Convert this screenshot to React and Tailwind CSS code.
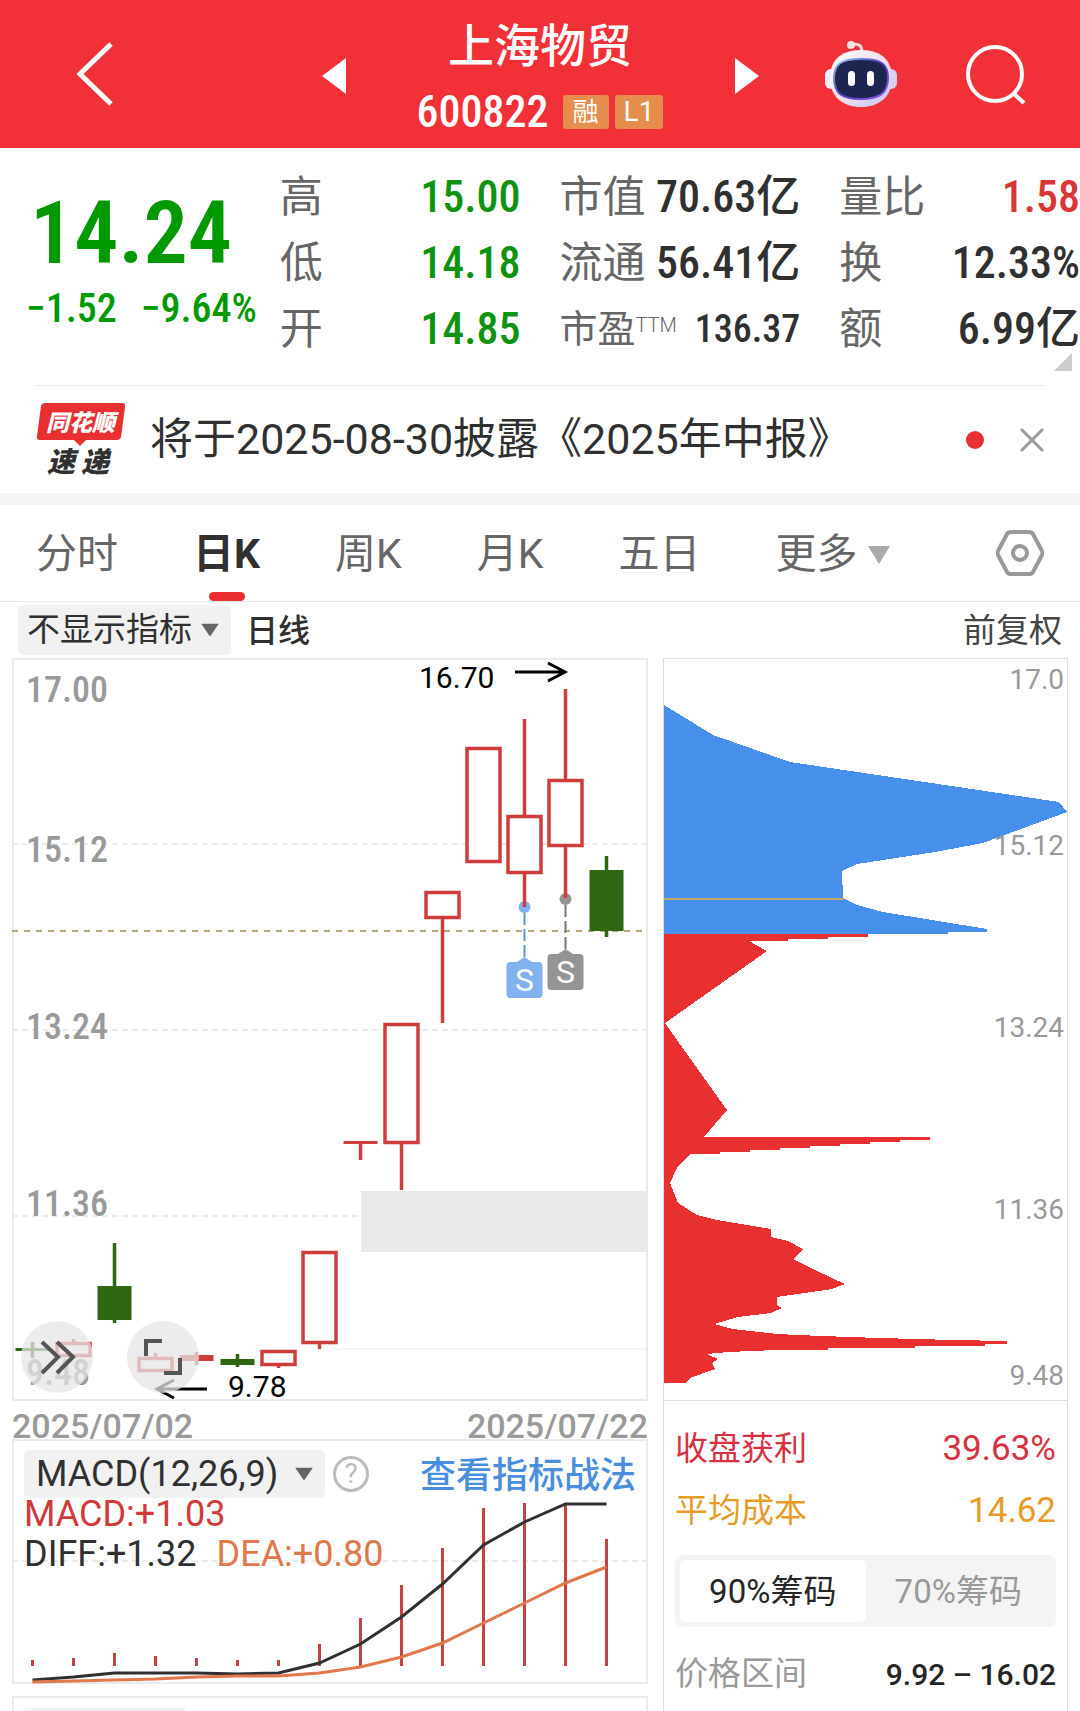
import React, { useState } from "react";

const SANS = "font-['Roboto','Noto_Sans_CJK_SC',sans-serif]";
const DIGITS =
  "font-['Roboto_Condensed','Liberation_Sans_Narrow','Roboto','Noto_Sans_CJK_SC',sans-serif]";

const QUOTES = [
  [
    { label: "高", value: "15.00", color: "text-[#0f930f]" },
    { label: "低", value: "14.18", color: "text-[#0f930f]" },
    { label: "开", value: "14.85", color: "text-[#0f930f]" },
  ],
  [
    { label: "市值", value: "70.63亿", color: "text-[#303030]" },
    { label: "流通", value: "56.41亿", color: "text-[#303030]" },
    { label: "市盈", sup: "TTM", value: "136.37", color: "text-[#303030]" },
  ],
  [
    { label: "量比", value: "1.58", color: "text-[#d93636]" },
    { label: "换", value: "12.33%", color: "text-[#303030]" },
    { label: "额", value: "6.99亿", color: "text-[#303030]" },
  ],
];

const TABS = ["分时", "日K", "周K", "月K", "五日"];

// first candle center and the step between candles
const X0 = 20.5;
const STEP = 41;

// body top / bottom, wick top / bottom
const CANDLES = [
  { type: "down", body: [690, 693], wick: [684, 700] },
  { type: "up", body: [684, 699], wick: [681, 699] },
  { type: "down", body: [628, 662], wick: [585, 665] },
  { type: "up", body: [699, 714], wick: [695, 714] },
  { type: "flat", body: [697, 703], wick: [694, 707] },
  { type: "down", body: [701, 707], wick: [696, 709] },
  { type: "up", body: [692, 708], wick: [692, 710] },
  { type: "up", body: [593, 686], wick: [593, 691] },
  { type: "flat", body: [483, 486], wick: [483, 502] },
  { type: "up", body: [365, 486], wick: [365, 532] },
  { type: "up", body: [233, 261], wick: [233, 365] },
  { type: "up", body: [89, 205], wick: [89, 205] },
  { type: "up", body: [157, 216], wick: [61, 249] },
  { type: "up", body: [121, 189], wick: [31, 240] },
  { type: "down", body: [212, 273], wick: [198, 279] },
];

const PRICE_LABELS = [
  { text: "17.00", y: 44 },
  { text: "15.12", y: 204 },
  { text: "13.24", y: 381 },
  { text: "11.36", y: 558 },
  { text: "9.48", y: 727 },
];

const CHIP_LABELS = [
  { text: "17.0", y: 31 },
  { text: "15.12", y: 197 },
  { text: "13.24", y: 379 },
  { text: "11.36", y: 561 },
  { text: "9.48", y: 727 },
];

const CHIPS_ABOVE =
  "1,47 50,77 127,104 396,144 404,154 320,185 272,194 194,206 179,213 180,240 194,247 220,254 324,271 324,274 285,274 285,276 1,276";
const CHIPS_BELOW =
  "1,276 205,276 205,279 165,279 165,281 125,281 125,283 86,283 104,293 2,365 14,382 64,452 41,479 267,479 267,482 237,482 237,484 207,484 207,486 177,486 177,488 147,488 147,490 117,490 117,492 87,492 87,494 57,494 57,496 27,496 14,510 7,525 15,545 34,557 54,562 108,571 108,579 125,583 140,591 130,601 152,612 182,626 169,631 134,636 114,639 114,647 119,650 108,655 75,659 51,666 70,671 114,676 158,678 217,680 290,682 344,683 344,686 322,686 322,688 252,688 252,690 165,690 165,692 113,692 65,694 44,696 55,701 49,705 52,711 27,720 23,725 1,725";

const MACD_BARS = [221, 219, 214, 217, 219, 221, 221, 205, 179, 146, 109, 69, 64, 65, 100];
const DIFF = [241, 238, 234, 234, 234, 235, 234, 224, 205, 178, 145, 106, 83, 65, 65];
const DEA = [243, 242, 241, 240, 238, 237, 237, 234, 228, 218, 204, 184, 164, 144, 128];

const toPoints = (values) => values.map((y, i) => `${X0 + i * STEP},${y}`).join(" ");

const Robot = () => (
  <svg width="72" height="68" viewBox="0 0 72 68">
    <defs>
      <linearGradient id="shell" x1="0" y1="0" x2="1" y2="1">
        <stop offset="0" stopColor="#fff" />
        <stop offset="0.5" stopColor="#f3dfee" />
        <stop offset="1" stopColor="#c3c2f7" />
      </linearGradient>
      <linearGradient id="rim" x1="0" y1="0" x2="1" y2="1">
        <stop offset="0" stopColor="#8fd0f5" />
        <stop offset="0.5" stopColor="#4a38b8" />
        <stop offset="1" stopColor="#8d5be8" />
      </linearGradient>
    </defs>
    <path d="M27 4 C35 4 37 6 37 12" fill="none" stroke="#f7dce4" strokeWidth="3" />
    <circle cx="26" cy="5" r="4" fill="#fbe3e8" />
    <rect x="0" y="29" width="14" height="20" rx="6" fill="#eef0ff" />
    <rect x="58" y="29" width="14" height="20" rx="6" fill="#d9cdf6" />
    <path
      d="M36 10 C58 10 67 22 67 38 C67 57 54 67 36 67 C18 67 5 57 5 38 C5 22 14 10 36 10 Z"
      fill="url(#shell)"
    />
    <path
      d="M36 19 C56 19 63 24 63 38 C63 53 55 59 36 59 C17 59 9 53 9 38 C9 24 16 19 36 19 Z"
      fill="#1c2550"
      stroke="url(#rim)"
      strokeWidth="2"
    />
    <rect x="23" y="31" width="7" height="15" rx="3.5" fill="#fff" />
    <rect x="42" y="31" width="7" height="15" rx="3.5" fill="#fff" />
  </svg>
);

const Header = () => (
  <header className="grid h-[148px] grid-cols-[1fr_437px_1fr] items-center bg-[#f13038] text-white">
    <button aria-label="返回" className="justify-self-start pl-[75px]">
      <svg width="40" height="68" viewBox="0 0 40 68">
        <path d="M36 4 L5 34 L36 64" fill="none" stroke="#fff" strokeWidth="5" />
      </svg>
    </button>
    <div className="flex items-center justify-between">
      <button aria-label="上一只" className="pt-1">
        <svg width="24" height="36" viewBox="0 0 24 36">
          <path d="M24 0 V36 L0 18 Z" fill="#fff" />
        </svg>
      </button>
      <div className="flex flex-col items-center gap-2 pt-2">
        <h1 className="text-[46px] font-medium leading-[60px]">上海物贸</h1>
        <div className="flex items-center gap-[6px]">
          <span className={`mr-2 text-[44px] font-medium leading-[56px] ${DIGITS}`}>600822</span>
          <span className="rounded-[3px] bg-[#e48d4c] px-[10px] text-[26px] leading-[34px]">融</span>
          <span className="rounded-[3px] bg-[#e48d4c] px-[9px] text-[28px] leading-[34px]">L1</span>
        </div>
      </div>
      <button aria-label="下一只" className="pt-1">
        <svg width="24" height="36" viewBox="0 0 24 36">
          <path d="M0 0 V36 L24 18 Z" fill="#fff" />
        </svg>
      </button>
    </div>
    <div className="flex items-center justify-end gap-[68px] pr-[53px]">
      <button aria-label="助手">
        <Robot />
      </button>
      <button aria-label="搜索">
        <svg width="62" height="62" viewBox="0 0 62 62">
          <circle cx="30" cy="31" r="27" fill="none" stroke="#fff" strokeWidth="4" />
          <path d="M48 50 L59 60" stroke="#fff" strokeWidth="4" />
        </svg>
      </button>
    </div>
  </header>
);

const Quote = () => (
  <section className="relative grid grid-cols-4 gap-x-[39px] pt-4 pb-[23px]">
    <div className={`whitespace-nowrap pt-6 text-[#009900] ${DIGITS}`}>
      <div className="pl-[30px] text-[88px] font-semibold leading-[90px]">14.24</div>
      <div className="flex gap-6 pl-[26px] text-[40px] font-medium leading-[62px]">
        <span>−1.52</span>
        <span>−9.64%</span>
      </div>
    </div>
    {QUOTES.map((column, i) => (
      <dl key={i}>
        {column.map((item) => (
          <div key={item.label} className="flex h-[66px] items-center justify-between whitespace-nowrap">
            <dt className={`text-[#666] ${item.sup ? "text-[38px]" : "text-[43px]"}`}>
              {item.label}
              {item.sup && <sup className="text-[20px] font-light">{item.sup}</sup>}
            </dt>
            <dd
              className={`font-medium ${DIGITS} ${item.color} ${item.sup ? "text-[38px]" : "text-[44px]"}`}
            >
              {item.value}
            </dd>
          </div>
        ))}
      </dl>
    ))}
    <svg className="absolute right-2 bottom-[14px]" width="18" height="18" viewBox="0 0 18 18">
      <path d="M18 0 V18 H0 Z" fill="#ccc" />
    </svg>
  </section>
);

const News = () => (
  <section className="mx-9 flex h-[108px] items-center border-t border-[#eaeaea]">
    <svg
      className={`overflow-visible ${SANS}`}
      width="90"
      height="76"
      viewBox="0 0 90 76"
      fontStyle="italic"
      fontWeight="900"
    >
      <path
        d="M9 1 H86 Q90 1 89 5 L85 35 Q84 38 81 38 H50 L44 44 L38 38 H4 Q0 38 1 34 L5 4 Q6 1 9 1 Z"
        fill="#e93030"
      />
      <text x="10" y="29" fontSize="23" fill="#fff">
        同花顺
      </text>
      <text x="11" y="70" fontSize="28" fill="#303030">
        速
      </text>
      <text x="45" y="70" fontSize="28" fill="#303030">
        递
      </text>
    </svg>
    <a href="#news" className="ml-6 flex-1 whitespace-nowrap text-[43px] text-[#303030]">
      将于2025-08-30披露《2025年中报》
    </a>
    <span className="size-[18px] rounded-full bg-[#e93030]" />
    <button aria-label="关闭" className="ml-9">
      <svg width="24" height="24" viewBox="0 0 24 24">
        <path d="M1 1 L23 23 M23 1 L1 23" stroke="#999" strokeWidth="3" />
      </svg>
    </button>
  </section>
);

const Tabs = () => {
  const [tab, setTab] = useState("日K");
  return (
    <nav className="flex h-[97px] items-stretch gap-[75px] border-b border-[#e6e6e6] px-9 text-[41px]">
      {TABS.map((t) => (
        <button
          key={t}
          className={`relative pt-1 whitespace-nowrap ${tab === t ? "font-bold text-[#303030]" : "text-[#666]"}`}
          onClick={() => setTab(t)}
        >
          {t}
          {tab === t && (
            <span className="absolute bottom-0 left-1/2 h-[9px] w-9 -translate-x-1/2 rounded-full bg-[#e93030]" />
          )}
        </button>
      ))}
      <button className="flex items-center gap-[10px] pt-1 whitespace-nowrap text-[#666]">
        更多
        <svg width="22" height="18" viewBox="0 0 22 18">
          <path d="M0 0 H22 L11 18 Z" fill="#aaa" />
        </svg>
      </button>
      <button aria-label="设置" className="ml-auto">
        <svg width="48" height="46" viewBox="0 0 48 46" fill="none" stroke="#999">
          <path
            d="M15 2 H33 Q36 2 37 4 L46 21 Q47 23 46 25 L37 42 Q36 44 33 44 H15 Q12 44 11 42 L2 25 Q1 23 2 21 L11 4 Q12 2 15 2 Z"
            strokeWidth="4"
          />
          <circle cx="24" cy="23" r="7" strokeWidth="4" />
        </svg>
      </button>
    </nav>
  );
};

const Arrow = () => (
  <svg className="pointer-events-none absolute top-1/2 right-3 -translate-y-1/2" width="18" height="13" viewBox="0 0 18 13">
    <path d="M0 0 H18 L9 13 Z" fill="#666" />
  </svg>
);

const Marker = ({ x, dot, top, color, line }) => (
  <g>
    <circle cx={x} cy={dot} r="6" fill={color} />
    <path d={`M${x} ${dot + 6} V${top}`} stroke={line} strokeWidth="2" strokeDasharray="12 4" />
    <path d={`M${x - 9} ${top + 1} L${x} ${top - 5} L${x + 9} ${top + 1} Z`} fill={color} />
    <rect x={x - 18} y={top} width="36" height="36" rx="4" fill={color} />
    <text x={x} y={top + 29} fontSize="32" fill="#fff" textAnchor="middle">
      S
    </text>
  </g>
);

const KLine = () => (
  <div className="relative">
    <svg className={`block w-full overflow-visible ${SANS}`} viewBox="0 0 636 743">
      <rect x="1" y="1" width="634" height="741" fill="none" stroke="#ebebeb" strokeWidth="2" />
      <g stroke="#ebebeb" strokeWidth="2">
        <path d="M0 186 H636 M0 372 H636 M0 558 H636" strokeDasharray="6 4" />
        <path d="M320 691 H636" strokeWidth="1" />
      </g>
      <rect x="349" y="533" width="287" height="61" fill="#e9e9e9" />
      <path d="M0 273 H630" stroke="#bda57a" strokeWidth="2" strokeDasharray="6 6" />
      <g className={DIGITS} fontSize="36" fontWeight="500" fill="#999">
        {PRICE_LABELS.map((l) => (
          <text key={l.text} x="14" y={l.y}>
            {l.text}
          </text>
        ))}
      </g>
      <Marker x={512.5} dot={249} top={304} color="#82b2ee" line="#5b96dc" />
      <Marker x={553.5} dot={241} top={296} color="#949494" line="#777" />
      {CANDLES.map((c, i) => {
        const x = X0 + i * STEP;
        const [top, bottom] = c.body;
        const color = c.type === "down" ? "#2f6612" : "#cf3c3c";
        return (
          <g key={i} stroke={color} strokeWidth="3.5">
            <path d={`M${x} ${c.wick[0]} V${top} M${x} ${bottom} V${c.wick[1]}`} />
            {c.type === "up" ? (
              <rect x={x - 16.5} y={top + 1.5} width="33" height={bottom - top - 3} fill="#fff" />
            ) : (
              <rect x={x - 17} y={top} width="34" height={bottom - top} fill={color} stroke="none" />
            )}
          </g>
        );
      })}
      <g fontSize="30" fill="#000">
        <text x="407" y="30">16.70</text>
        <text x="216" y="739">9.78</text>
      </g>
      <g fill="none" stroke="#000" strokeWidth="3">
        <path d="M503 14 H552 M536 5 L553 14 L536 23" />
        <path d="M195 731 H146 M162 722 L145 731 L162 740" />
      </g>
    </svg>
    <button aria-label="展开" className="absolute bottom-2 left-[9px] size-[72px] rounded-full bg-[#e6e6e6]/75">
      <svg width="72" height="72" viewBox="0 0 72 72" fill="none" stroke="#555" strokeWidth="4">
        <path d="M21 21 L37 36 L21 52 M36 21 L52 36 L36 52" />
      </svg>
    </button>
    <button aria-label="全屏" className="absolute bottom-2 left-[115px] size-[72px] rounded-full bg-[#e6e6e6]/75">
      <svg width="72" height="72" viewBox="0 0 72 72" fill="none" stroke="#555" strokeWidth="4">
        <path d="M19 35 V20 H35 M37 52 H53 V37" />
      </svg>
    </button>
  </div>
);

const Macd = () => (
  <div className="relative">
    <svg className="block w-full" viewBox="0 0 636 245">
      <rect x="1" y="1" width="634" height="243" fill="none" stroke="#ebebeb" strokeWidth="2" />
      <path d="M0 122 H636" stroke="#ebebeb" strokeWidth="2" strokeDasharray="6 4" />
      {MACD_BARS.map((y, i) => (
        <path key={i} d={`M${X0 + i * STEP} ${y} V227`} stroke="#c94242" strokeWidth="3" />
      ))}
      <polyline points={toPoints(DIFF)} fill="none" stroke="#303030" strokeWidth="3" />
      <polyline points={toPoints(DEA)} fill="none" stroke="#e0784c" strokeWidth="3" />
    </svg>
    {/* controls over the chart */}
    <div className="absolute inset-x-3 top-[11px]">
      <div className="flex h-12 items-center justify-between">
        <div className="flex items-center gap-2">
          <div className="relative">
            <select
              aria-label="指标"
              className="h-12 w-[301px] appearance-none rounded-[5px] bg-[#f1f1f1] pl-3 text-[36px] leading-[48px] text-[#303030]"
            >
              <option>MACD(12,26,9)</option>
            </select>
            <Arrow />
          </div>
          <button
            aria-label="说明"
            className="flex size-9 items-center justify-center rounded-full border-3 border-[#bbb] text-[28px] leading-none text-[#bbb]"
          >
            ?
          </button>
        </div>
        <a href="#guide" className="pt-1 whitespace-nowrap text-[36px] leading-[48px] font-medium text-[#4a8fdf]">
          查看指标战法
        </a>
      </div>
      <div className="-mt-1 text-[36px] leading-10 text-[#303030]">
        <div className="text-[#d03a3a]">MACD:+1.03</div>
        <div className="flex gap-5">
          <span>DIFF:+1.32</span>
          <span className="text-[#e0784c]">DEA:+0.80</span>
        </div>
      </div>
    </div>
  </div>
);

const Chips = () => {
  const [range, setRange] = useState("90%");
  return (
    <section className="flex flex-col border border-b-0 border-[#ddd]">
      <svg className={`block w-full border-b border-[#ddd] ${SANS}`} viewBox="1 1 403 741">
        <g shapeRendering="crispEdges">
          <polygon points={CHIPS_ABOVE} fill="#4690ec" />
          <polygon points={CHIPS_BELOW} fill="#e93030" />
          <path d="M1 241 H181" stroke="#c2a866" strokeWidth="2" />
        </g>
        <g fontSize="28" fill="#999" textAnchor="end">
          {CHIP_LABELS.map((l) => (
            <text key={l.text} x="401" y={l.y}>
              {l.text}
            </text>
          ))}
        </g>
      </svg>
      <div className="px-[11px] pt-[17px] text-[33px]">
        <div className="flex h-[62px] items-center justify-between text-[#d8303f]">
          <span>收盘获利</span>
          <span className="text-[35px]">39.63%</span>
        </div>
        <div className="flex h-[62px] items-center justify-between text-[#e79c27]">
          <span>平均成本</span>
          <span className="text-[35px]">14.62</span>
        </div>
        <div className="mt-[13px] flex h-[72px] rounded-lg bg-[#f4f4f4] p-[5px]">
          {["90%", "70%"].map((r) => (
            <button
              key={r}
              className={`flex-1 rounded-[5px] pt-0.5 whitespace-nowrap ${
                range === r ? "bg-white text-[#262626]" : "text-[#999]"
              }`}
              onClick={() => setRange(r)}
            >
              {r}筹码
            </button>
          ))}
        </div>
        <div className="mt-4 flex h-[62px] items-center justify-between whitespace-nowrap text-[#999]">
          <span>价格区间</span>
          <span className="text-[30px] font-medium text-[#262626]">9.92 – 16.02</span>
        </div>
      </div>
    </section>
  );
};

const App = () => (
  <div className={`flex min-h-screen flex-col bg-white ${SANS}`}>
    <Header />
    <Quote />
    <News />
    <div className="h-3 bg-[#f4f4f4]" />
    <Tabs />
    <div className="flex h-14 items-center px-[18px] text-[33px]">
      <div className="relative">
        <select
          aria-label="主图指标"
          className="h-[50px] w-[213px] appearance-none rounded-[5px] bg-[#f1f1f1] pl-[9px] leading-[50px] text-[#303030]"
        >
          <option>不显示指标</option>
        </select>
        <Arrow />
      </div>
      <span className="ml-[15px] pt-0.5 text-[32px] font-medium text-[#303030]">日线</span>
      <button className="ml-auto pt-0.5 text-[#444]">前复权</button>
    </div>
    <main className="grid flex-1 grid-cols-[636fr_405fr] gap-[15px] px-3">
      <div className="flex flex-col">
        <KLine />
        <div className="flex h-[38px] items-center justify-between pt-3 text-[34px] leading-[37px] font-medium text-[#999]">
          <span>2025/07/02</span>
          <span>2025/07/22</span>
        </div>
        <Macd />
        <div className="mt-3 flex-1 border-2 border-b-0 border-[#ebebeb] px-[10px] pt-[10px]">
          <div className="h-[3px] w-[161px] rounded-t-[5px] bg-[#f1f1f1]" />
        </div>
      </div>
      <Chips />
    </main>
  </div>
);

export default App;
